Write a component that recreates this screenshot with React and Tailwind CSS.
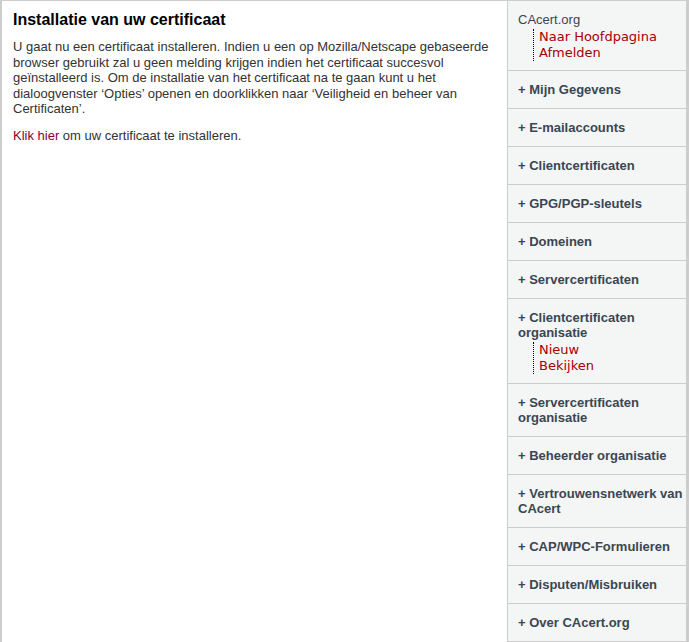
import React from "react";

const sans = { fontFamily: '"Liberation Sans", Arial, sans-serif' };
const dv = { fontFamily: '"DejaVu Sans", Verdana, sans-serif' };

function SubList({ items }) {
  return (
    <ul className="ml-[15px] mt-[2px] mb-[-2px] border-l border-dotted border-black pl-[5px]" style={dv}>
      {items.map((t) => (
        <li key={t} className="text-[13px] leading-[16px] text-[#a80000]">
          {t}
        </li>
      ))}
    </ul>
  );
}

function Item({ children, sub, bold = true }) {
  return (
    <div className="border-b border-[#cccccc] pl-[10px] pr-0 py-[11px]">
      <div
        className={`text-[13px] leading-[15px] text-[#3a4652] ${bold ? "font-bold" : ""}`}
        style={sans}
      >
        {children}
      </div>
      {sub && <SubList items={sub} />}
    </div>
  );
}

export default function App() {
  const menu = [
    { t: "+ Mijn Gegevens" },
    { t: "+ E-mailaccounts" },
    { t: "+ Clientcertificaten" },
    { t: "+ GPG/PGP-sleutels" },
    { t: "+ Domeinen" },
    { t: "+ Servercertificaten" },
    { t: "+ Clientcertificaten organisatie", sub: ["Nieuw", "Bekijken"] },
    { t: "+ Servercertificaten organisatie" },
    { t: "+ Beheerder organisatie" },
    { t: "+ Vertrouwensnetwerk van CAcert" },
    { t: "+ CAP/WPC-Formulieren" },
    { t: "+ Disputen/Misbruiken" },
    { t: "+ Over CAcert.org" },
  ];
  return (
    <div
      className="w-[689px] h-[642px] bg-[#cdcdcd] pt-px pl-[2px] pr-[3px] flex overflow-hidden"
      style={sans}
    >
      <div className="flex-1 bg-white px-[11px] pt-[9px]">
        <h1 className="text-[16px] leading-[19px] font-bold text-black">
          Installatie van uw certificaat
        </h1>
        <p className="mt-[10px] text-[13px] leading-[15.6px] text-[#333333]">
          U gaat nu een certificaat installeren. Indien u een op Mozilla/Netscape gebaseerde
          browser gebruikt zal u geen melding krijgen indien het certificaat succesvol
          geïnstalleerd is. Om de installatie van het certificaat na te gaan kunt u het
          dialoogvenster ‘Opties’ openen en doorklikken naar ‘Veiligheid en beheer van
          Certificaten’.
        </p>
        <p className="mt-[11px] text-[13px] leading-[15.6px] text-[#333333]">
          <span className="text-[#850036]">Klik hier</span> om uw certificaat te installeren.
        </p>
      </div>
      <div className="w-[179px] shrink-0 border-l border-[#cccccc] bg-[#f4f5f5] self-start">
        <Item bold={false} sub={["Naar Hoofdpagina", "Afmelden"]}>
          CAcert.org
        </Item>
        {menu.map((m) => (
          <Item key={m.t} sub={m.sub}>
            {m.t}
          </Item>
        ))}
      </div>
    </div>
  );
}
